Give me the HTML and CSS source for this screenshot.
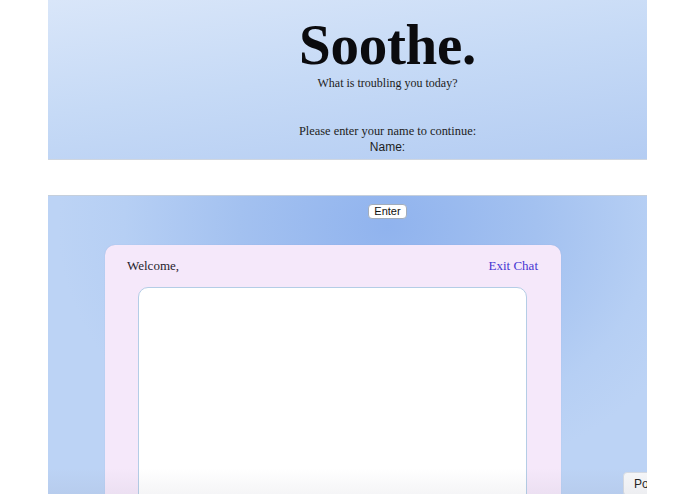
FILE: index.html
```html
<!DOCTYPE html>
<html>
<head>
<meta charset="utf-8">
<link rel="stylesheet" href="styles.css">
</head>
<body>
<div class="viewport">
  <div class="page">
    <header class="hero">
      <h1 class="title">Soothe.</h1>
      <p class="subtitle">What is troubling you today?</p>
      <p class="prompt">Please enter your name to continue:</p>
      <label class="name-label">Name:</label>
    </header>
    <div class="spacer"></div>
    <section class="chat-area">
      <div class="enter-row"><button class="enter-btn">Enter</button></div>
      <div class="card">
        <div class="card-head">
          <span class="welcome">Welcome,</span>
          <a class="exit">Exit Chat</a>
        </div>
        <div class="messages"></div>
      </div>
      <button class="post-btn">Post</button>
      <div class="shade"></div>
    </section>
  </div>
</div>
</body>
</html>
```
FILE: styles.css
```css
html, body {
  margin: 0;
  padding: 0;
  background: #ffffff;
  height: 494px;
  overflow: hidden;
}
.viewport {
  margin-left: 48px;
  width: 599px;
  height: 494px;
  overflow: hidden;
}
.page {
  width: 679px;
  font-family: "Liberation Serif", "Times New Roman", serif;
  color: #1d1d22;
}
.hero {
  height: 159px;
  border-bottom: 1px solid #cfd6e0;
  background: linear-gradient(172deg, #d9e6f9 0%, #c6daf6 45%, #b2cbf2 100%);
  text-align: center;
  display: flex;
  flex-direction: column;
  align-items: center;
}
.title {
  margin: 15px 0 0;
  font-size: 57px;
  line-height: 60px;
  font-weight: bold;
  color: #0b0b0e;
  letter-spacing: -0.3px;
}
.subtitle {
  margin: 0;
  font-size: 12px;
  line-height: 16px;
}
.prompt {
  margin: 32px 0 0;
  font-size: 12.4px;
  line-height: 16px;
}
.name-label {
  margin-top: 1px;
  font-family: "Liberation Sans", Arial, sans-serif;
  font-size: 12px;
  line-height: 14px;
}
.spacer {
  height: 35px;
}
.chat-area {
  position: relative;
  height: 300px;
  border-top: 1px solid #c5cfdc;
  background: radial-gradient(ellipse 330px 260px at 340px 30px, #90b3ee 0%, #a3c1f0 45%, #b6cff4 80%, #bcd3f5 100%);
  overflow: hidden;
}
.enter-row {
  display: flex;
  justify-content: center;
  padding-top: 8px;
}
.enter-btn {
  height: 15px;
  padding: 0 5px;
  font-family: "Liberation Sans", Arial, sans-serif;
  font-size: 11px;
  line-height: 13px;
  color: #111;
  background: #ffffff;
  border: 1px solid #a3adbb;
  border-radius: 4px;
}
.card {
  margin: 26px 0 0 57px;
  width: 456px;
  height: 260px;
  box-sizing: border-box;
  padding: 13px 23px 0 22px;
  background: #f5e8fa;
  border-radius: 10px;
  box-shadow: 0 0 1px rgba(120, 120, 170, 0.3);
}
.card-head {
  display: flex;
  justify-content: space-between;
  font-size: 13px;
  line-height: 16px;
}
.welcome {
  color: #25222c;
}
.exit {
  color: #4636d2;
  cursor: pointer;
}
.messages {
  margin: 13px 11px 0 11px;
  height: 260px;
  background: #ffffff;
  border: 1px solid #b4cde6;
  border-radius: 10px;
}
.post-btn {
  position: absolute;
  left: 575px;
  top: 276px;
  width: 60px;
  height: 24px;
  padding: 0 0 0 10px;
  text-align: left;
  font-family: "Liberation Sans", Arial, sans-serif;
  font-size: 12px;
  color: #222;
  background: #f6f7f9;
  border: 1px solid #d6dbe3;
  border-radius: 4px;
}
.shade {
  position: absolute;
  left: 0;
  right: 0;
  top: 272px;
  height: 28px;
  background: linear-gradient(to bottom, rgba(120, 120, 140, 0), rgba(120, 120, 140, 0.08));
  pointer-events: none;
}
```
